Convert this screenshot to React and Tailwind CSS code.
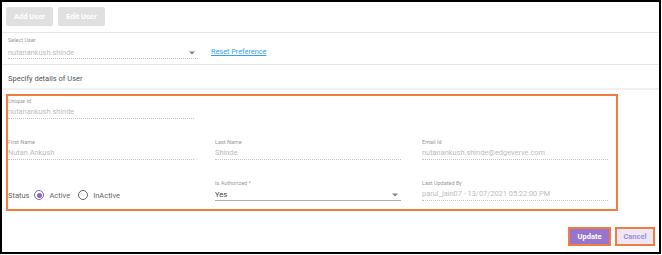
import React from 'react';

const Caret = () => (
  <svg width="6" height="4" viewBox="0 0 6 4" className="shrink-0">
    <path d="M0 0.5 L6 0.5 L3 3.5 Z" fill="#808080" />
  </svg>
);

// Read-only text field with a dotted underline
const Field = ({ label, value }) => (
  <div className="flex flex-col">
    <div className="text-[5.5px] leading-[7px] text-[#9a9a9a]">{label}</div>
    <div className="mt-[2px] h-[12px] border-b border-dotted border-[#c4c4c4] text-[7.4px] leading-[9px] text-[#bdbdbd]">
      {value}
    </div>
  </div>
);

const Radio = ({ checked, label }) => (
  <label className="flex items-center gap-[5px]">
    <span
      className={
        checked
          ? 'w-[10px] h-[10px] rounded-full border-[1.5px] border-[#8a68c9] flex items-center justify-center'
          : 'w-[10px] h-[10px] rounded-full border-[1.5px] border-[#666]'
      }
    >
      {checked && <span className="w-[5px] h-[5px] rounded-full bg-[#8a68c9]" />}
    </span>
    <span className="text-[7.5px] leading-[9px] text-[#666]">{label}</span>
  </label>
);

export default function App() {
  return (
    <div className="w-[662px] h-[255px] bg-white font-['Roboto',sans-serif] leading-[9px]">
      <div className="w-[661px] h-[254px] border-2 border-black flex flex-col">
        {/* Toolbar */}
        <div className="h-[31px] pt-[5px] pl-[4px] flex gap-[5px] border-b border-[#e6e6e6]">
          <button className="w-[47px] h-[19px] rounded-[2px] bg-[#e0e0e0] text-white font-bold text-[7.5px]">
            Add User
          </button>
          <button className="w-[47px] h-[19px] rounded-[2px] bg-[#e0e0e0] text-white font-bold text-[7.5px]">
            Edit User
          </button>
        </div>

        {/* Select user */}
        <div className="h-[32px] pt-[4px] pl-[6px] flex items-start gap-[13px] border-b border-[#e6e6e6]">
          <div className="w-[190px] flex flex-col">
            <div className="text-[5.5px] leading-[7px] text-[#9a9a9a]">Select User</div>
            <div className="mt-[3px] h-[12px] flex items-center justify-between pr-[3px] border-b border-dotted border-[#c4c4c4]">
              <span className="text-[7.4px] leading-[9px] text-[#bdbdbd]">nutanankush.shinde</span>
              <Caret />
            </div>
          </div>
          <a className="mt-[10px] text-[7.3px] leading-[9px] text-[#3a9ff0] underline">Reset Preference</a>
        </div>

        {/* Section heading */}
        <div className="h-[25px] pt-[9px] pl-[6px] border-b-2 border-[#f0f0f0] text-[7.5px] leading-[9px] text-[#555]">
          Specify details of User
        </div>

        {/* Details */}
        <div className="mt-[4px] ml-[4px] w-[612px] h-[117px] border-2 border-[#f47b3f] pt-[2px] flex flex-col gap-[20px]">
          <div className="grid grid-cols-[186px_186px_186px] gap-x-[21px]">
            <Field label="Unique Id" value="nutanankush.shinde" />
          </div>
          <div className="grid grid-cols-[186px_186px_186px] gap-x-[21px]">
            <Field label="First Name" value="Nutan Ankush" />
            <Field label="Last Name" value="Shinde" />
            <Field label="Email Id" value="nutanankush.shinde@edgeverve.com" />
          </div>
          <div className="grid grid-cols-[186px_186px_186px] gap-x-[21px]">
            <div className="pt-[9px] flex items-center gap-[5px] h-[21px]">
              <span className="text-[7.5px] leading-[9px] text-[#666]">Status</span>
              <div className="flex items-center gap-[8px]">
                <Radio checked label="Active" />
                <Radio label="InActive" />
              </div>
            </div>
            <div className="flex flex-col">
              <div className="text-[5.5px] leading-[7px] text-[#9a9a9a]">Is Authorized *</div>
              <div className="mt-[2px] h-[12px] flex items-center justify-between pr-[3px] border-b border-[#b0b0b0]">
                <span className="text-[7.5px] leading-[9px] text-[#444]">Yes</span>
                <Caret />
              </div>
            </div>
            <Field label="Last Updated By" value="parul_jain07 - 13/07/2021 05:22:00 PM" />
          </div>
        </div>

        {/* Actions */}
        <div className="mt-[16px] pr-[4px] flex justify-end gap-[4px]">
          <button className="w-[43px] h-[19px] border-2 border-[#f47b3f] bg-[#9575cd] text-white font-bold text-[7.5px]">
            Update
          </button>
          <button className="w-[40px] h-[19px] border-2 border-[#f47b3f] bg-[#ede7f6] text-[#a08fd8] font-bold text-[7.5px]">
            Cancel
          </button>
        </div>
      </div>
    </div>
  );
}
